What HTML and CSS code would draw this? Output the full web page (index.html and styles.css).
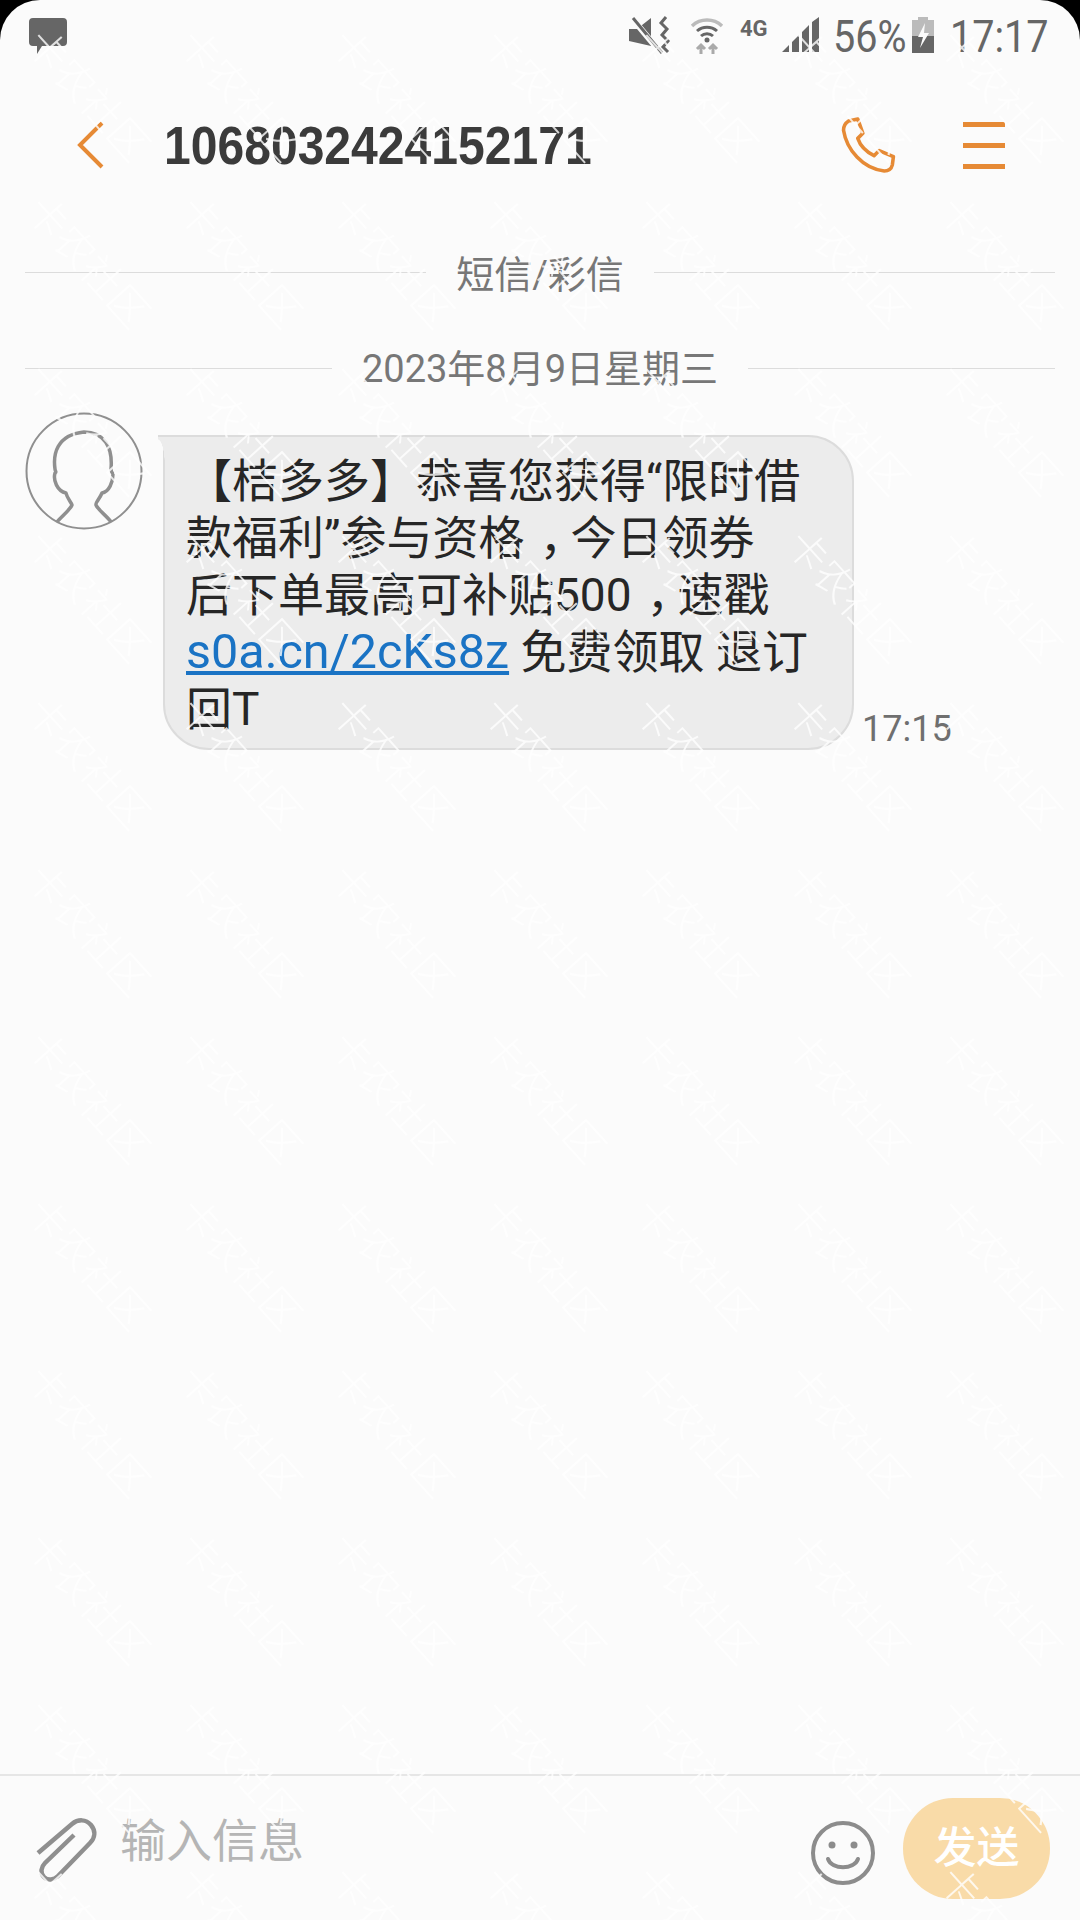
FILE: index.html
```html
<!DOCTYPE html>
<html lang="zh-CN">
<head>
    <meta charset="UTF-8">
    <meta name="viewport" content="width=device-width, initial-scale=1.0">
    <title>信息</title>
    <link rel="stylesheet" href="styles.css">
</head>
<body>
<div class="screen">

    <div class="status-bar">
        <svg class="icon-msg" width="40" height="38" viewBox="0 0 40 38">
            <path d="M5 1h30a4 4 0 0 1 4 4v20a4 4 0 0 1-4 4H14l-5 8v-8H5a4 4 0 0 1-4-4V5a4 4 0 0 1 4-4z" fill="#666"/>
        </svg>
        <div class="status-right">
            <svg class="icon-mute" width="44" height="40" viewBox="0 0 44 40">
                <path d="M1 14h8L23 3v28L1 26z" fill="#666"/>
                <path d="M3 2l30 36" stroke="#fbfbfb" stroke-width="6"/>
                <path d="M5 3l29 35" stroke="#666" stroke-width="3"/>
                <path d="M38 2l-5 6 6 6-5 6 6 6-5 6 5 5" fill="none" stroke="#666" stroke-width="3"/>
            </svg>
            <svg class="icon-wifi" width="34" height="38" viewBox="0 0 34 38">
                <path d="M2 9a22 22 0 0 1 30 0" fill="none" stroke="#bbb" stroke-width="3.5"/>
                <path d="M7 14a15 15 0 0 1 20 0" fill="none" stroke="#666" stroke-width="3"/>
                <path d="M11 19a9 9 0 0 1 12 0" fill="none" stroke="#666" stroke-width="3"/>
                <circle cx="17" cy="23" r="2.5" fill="#666"/>
                <path d="M11 28v9M7 32l4-4 4 4M23 37v-9M19 32l4-4 4 4" fill="none" stroke="#aaa" stroke-width="3"/>
            </svg>
            <span class="net-type">4G</span>
            <svg class="icon-signal" width="38" height="36" viewBox="0 0 38 36">
                <path d="M0 35l7-7v7zM10 35V25l7-7v17zM20 35V15l7-7v27zM30 35V5l7-5v35z" fill="#666"/>
            </svg>
            <span class="status-text pct">56%</span>
            <svg class="icon-batt" width="24" height="36" viewBox="0 0 24 36">
                <path d="M7 0h10v3h6v33H1V3h6z" fill="#bbb"/>
                <path d="M1 19h22v17H1z" fill="#666"/>
                <path d="M14 6l-7 14h5l-3 11 9-15h-5z" fill="#fbfbfb"/>
            </svg>
            <span class="status-text clock">17:17</span>
        </div>
    </div>

    <div class="app-bar">
        <svg class="icon-back" width="30" height="48" viewBox="0 0 30 48">
            <path d="M26 2L4 24l22 22" fill="none" stroke="#e68a35" stroke-width="4"/>
        </svg>
        <h1 class="title">1068032424152171</h1>
        <svg class="icon-phone" width="60" height="57" viewBox="0 0 58 56">
            <path d="M7 4l9-2 5 14-5 5c2 6 8 13 16 17l5-5 14 6-1 8c-1 4-4 6-8 6C21 51 5 32 2 13 2 9 4 6 7 4z" fill="none" stroke="#e68a35" stroke-width="3.5" stroke-linejoin="round"/>
        </svg>
        <div class="menu-btn">
            <span></span>
            <span></span>
            <span></span>
        </div>
    </div>

    <div class="thread">
        <div class="divider divider-type"><span>短信/彩信</span></div>
        <div class="divider divider-date"><span>2023年8月9日星期三</span></div>

        <div class="msg-row">
            <svg class="avatar" width="118" height="118" viewBox="0 0 118 118">
                <circle cx="59" cy="59" r="57.5" fill="none" stroke="#8f8f8f" stroke-width="2"/>
                <path d="M32 110c4-5 13-12 15-17-1-3-5-7-6-12-9-2-13-13-11-20 2-1 0-2 0-4-2-14 1-34 29-37 20 0 29 15 27 37 0 2 0 3 2 5 0 8-4 18-11 19-2 5-7 10-6 12 2 5 11 11 15 17" fill="none" stroke="#8f8f8f" stroke-width="3.5" stroke-linejoin="round"/>
            </svg>
            <div class="bubble">【桔多多】恭喜您获得“限时借<br>款福利”参与资格<span class="punct">，</span>今日领券<br>后下单最高可补贴500<span class="punct">，</span>速戳<br><a class="link">s0a.cn/2cKs8z</a> 免费领取 退订<br>回T</div>
            <span class="msg-time">17:15</span>
        </div>
    </div>

    <div class="composer">
        <svg class="icon-clip" width="62" height="66" viewBox="0 0 62 66">
            <path d="M2 35L36 6c6-5 14-5 19 1s4 13-1 18L22 58c-4 4-10 5-14 1s-3-10 1-14L38 17" fill="none" stroke="#8f8f8f" stroke-width="4.5" transform="translate(0 1)"/>
        </svg>
        <div class="placeholder">输入信息</div>
        <svg class="icon-smile" width="66" height="66" viewBox="0 0 66 66">
            <circle cx="33" cy="33" r="30" fill="none" stroke="#8c8c8c" stroke-width="4"/>
            <circle cx="22" cy="25" r="3.5" fill="#8c8c8c"/>
            <circle cx="44" cy="25" r="3.5" fill="#8c8c8c"/>
            <path d="M18 39c4 11 26 11 30 0" fill="none" stroke="#8c8c8c" stroke-width="4" stroke-linecap="round"/>
        </svg>
        <div class="send-btn">发送</div>
    </div>

    <!-- watermark over the whole page -->
    <svg class="watermark" width="1080" height="1920">
        <defs>
            <pattern id="wm" width="152" height="167" patternUnits="userSpaceOnUse">
                <text class="wm-text" transform="translate(24 45) rotate(48)">卡农社区</text>
            </pattern>
        </defs>
        <rect width="1080" height="1920" fill="url(#wm)"/>
    </svg>
</div>
</body>
</html>
```

FILE: styles.css
```css
/* page */
* {
    box-sizing: border-box;
}
html, body {
    margin: 0;
    background: #000;
}
body {
    font-family: 'Roboto', 'Noto Sans CJK SC', sans-serif;
}
.screen {
    position: relative;
    width: 1080px;
    height: 1920px;
    display: flex;
    flex-direction: column;
    background: #fbfbfb;
    border-radius: 40px 40px 0 0;
    overflow: hidden;
}

/* status bar */
.status-bar {
    height: 70px;
    padding: 17px 32px 0 28px;
    display: flex;
    justify-content: space-between;
    align-items: flex-start;
}
.status-right {
    display: flex;
    align-items: flex-start;
}
.icon-mute {
    margin-top: -2px;
}
.icon-wifi {
    margin-left: 18px;
}
.net-type {
    width: 30px;
    margin-left: 16px;
    font-size: 22px;
    font-weight: 700;
    line-height: 24px;
    color: #666;
}
.icon-signal {
    margin: 0 0 0 12px;
}
.status-text {
    font-size: 44px;
    line-height: 40px;
    color: #666;
    display: block;
    transform-origin: left top;
}
.pct {
    width: 78px;
    margin-left: 13px;
    transform: scaleX(0.9);
}
.clock {
    width: 98px;
    margin-left: 15px;
    transform: scaleX(0.9);
}

/* app bar */
.app-bar {
    height: 150px;
    padding: 0 75px 0 76px;
    display: flex;
    align-items: center;
}
.title {
    flex: 1;
    margin: 0 0 0 58px;
    font-family: 'Liberation Sans', sans-serif;
    font-size: 54px;
    font-weight: 700;
    color: #3b3b3b;
    white-space: nowrap;
    transform-origin: left center;
    transform: scaleX(0.89);
}
.icon-phone {
    margin-right: 62px;
}
.menu-btn {
    width: 42px;
    display: flex;
    flex-direction: column;
    gap: 16px;
}
.menu-btn span {
    height: 5px;
    background: #e68a35;
}

/* thread */
.thread {
    flex: 1;
    padding: 0 25px;
}
.divider {
    display: flex;
    align-items: center;
    font-size: 38px;
    line-height: 48px;
    color: #777;
}
.divider::before, .divider::after {
    content: "";
    flex: 1;
    height: 1px;
    background: #dcdcdc;
}
.divider span {
    padding: 6px 30px 0;
}
.divider-type {
    margin-top: 25px;
}
.divider-date {
    margin-top: 44px;
}
.divider-date span {
    padding-top: 2px;
}
.msg-row {
    margin-top: 19px;
    display: flex;
    align-items: flex-start;
}
.avatar {
    flex-shrink: 0;
}
.bubble {
    position: relative;
    width: 691px;
    height: 315px;
    margin: 23px 0 0 20px;
    padding: 16px 0 0 21px;
    font-size: 46px;
    line-height: 57px;
    color: #262626;
    white-space: nowrap;
    background: #ececec;
    border: 2px solid #dcdcdc;
    border-radius: 0 46px 46px 46px;
}
/* little tail at the top left corner */
.bubble::before {
    content: "";
    position: absolute;
    left: -7px;
    top: -2px;
    width: 7px;
    height: 30px;
    border-top: 2px solid #dcdcdc;
    background: radial-gradient(ellipse 7px 28px at 0 100%, transparent 96%, #ececec 100%);
}
/* the phone's font sets the comma in the middle of its cell */
.punct {
    padding-left: 15px;
    letter-spacing: -15px;
}
.link {
    font-size: 48.5px;
    line-height: 0;
    color: #1a73c4;
    text-decoration: underline;
}
.msg-time {
    margin: 296px 0 0 8px;
    font-size: 36px;
    line-height: 42px;
    color: #6f6f6f;
}

/* composer */
.composer {
    height: 146px;
    padding: 22px 30px 0 36px;
    display: flex;
    align-items: flex-start;
    border-top: 2px solid #e6e6e6;
}
.icon-clip {
    margin-top: 19px;
}
.placeholder {
    flex: 1;
    margin: 12px 0 0 22px;
    font-size: 46px;
    line-height: 62px;
    color: #b5b5b5;
}
.icon-smile {
    margin: 22px 27px 0 0;
}
.send-btn {
    width: 147px;
    height: 101px;
    font-size: 43px;
    font-weight: 500;
    line-height: 101px;
    text-align: center;
    color: #fff;
    background: #f9dba8;
    border-radius: 50px;
}

/* watermark */
.watermark {
    position: absolute;
    left: 0;
    top: 0;
    pointer-events: none;
}
.wm-text {
    font-size: 40px;
    font-weight: 300;
    fill: #fff;
    opacity: 0.8;
}
```
